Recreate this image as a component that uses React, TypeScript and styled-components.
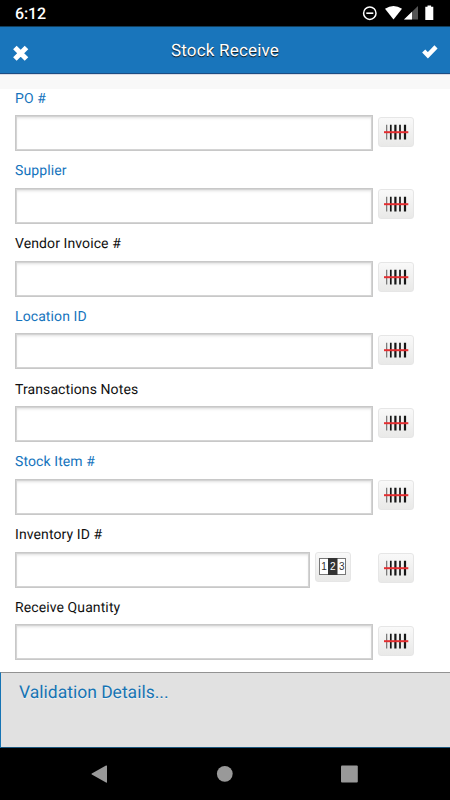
import React from "react";
import styled, { createGlobalStyle } from "styled-components";

const GlobalStyle = createGlobalStyle`
  * { box-sizing: border-box; }
  body { margin: 0; background: #fff; font-family: Roboto, "Liberation Sans", sans-serif; text-rendering: geometricPrecision; }
`;

const Screen = styled.div`
  width: 450px;
  height: 800px;
  display: flex;
  flex-direction: column;
  overflow: hidden;
  background: #fff;
`;

const StatusBar = styled.div`
  height: 26px;
  flex: none;
  display: flex;
  align-items: center;
  justify-content: space-between;
  padding: 2px 13px 0 15px;
  background: #000;
  color: #fff;
`;

const Clock = styled.span`
  font-size: 16px;
  font-weight: 500;
  line-height: 20px;
  letter-spacing: -0.15px;
  padding-bottom: 1px;
`;

const StatusIcons = styled.svg`
  display: block;
  width: 76px;
  height: 20px;
`;

const Header = styled.header`
  height: 48px;
  flex: none;
  display: grid;
  grid-template-columns: 40px 1fr 40px;
  align-items: center;
  background: #1975bb;
  border-top: 1px solid #123f5c;
  border-bottom: 1px solid #1b4c83;
`;

const Title = styled.h1`
  margin: 0;
  padding-top: 2px;
  color: #fff;
  font-size: 17px;
  font-weight: 400;
  line-height: 24px;
  letter-spacing: 0.2px;
  text-align: center;
  text-shadow: 0 1px 1px #111;
`;

const HeaderButton = styled.button`
  width: 40px;
  height: 46px;
  padding: 0;
  border: 0;
  background: none;
  svg { display: block; }
`;

const Strip = styled.div`
  height: 15px;
  flex: none;
  background: #f8f8f8;
  border-top: 1px solid #dadbe4;
`;

const Form = styled.form`
  height: 582px;
  flex: none;
  padding-left: 15px;
`;

const Field = styled.div`
  height: 72.75px;
`;

const Label = styled.label<{ $link?: boolean }>`
  display: block;
  height: 26px;
  padding-top: 0.6px;
  font-size: 14px;
  line-height: 18px;
  letter-spacing: 0.1px;
  color: ${(p) => (p.$link ? "#1674bd" : "#111")};
`;

const Controls = styled.div`
  display: flex;
  align-items: flex-start;
`;

const Input = styled.input<{ $short?: boolean }>`
  width: ${(p) => (p.$short ? 295 : 358)}px;
  height: 36px;
  margin: 0;
  padding: 0 8px;
  border: 1px solid #c8c8c8;
  border-radius: 0;
  background: #fff;
  box-shadow: inset 0 0 0 1px #d4d4d4, inset 0 2px 3px rgba(0, 0, 0, 0.13);
  font: inherit;
  outline: none;
`;

const IconButton = styled.button<{ $gap: number; $top: number }>`
  width: 36px;
  height: 30px;
  margin: ${(p) => p.$top}px 0 0 ${(p) => p.$gap}px;
  padding: 0;
  border: 1px solid #e6e6e6;
  border-radius: 3px;
  background: linear-gradient(#f9f9f9, #e9e9e8);
  svg { display: block; }
`;

const Validation = styled.section`
  height: 76px;
  flex: none;
  margin-top: 0.6px;
  padding: 9px 0 0 18px;
  background: #e1e1e1;
  border-top: 1px solid #929292;
  border-left: 1px solid #1674b4;
  border-bottom: 1px solid #1c587f;
  color: #1674b4;
  font-size: 17.5px;
  line-height: 22px;
  text-shadow: 0 1px 0 #f3f3f3;
`;

const NavBar = styled.nav`
  flex: 1;
  background: #000;
  svg { display: block; }
`;

const Barcode = () => (
  <svg width="34" height="28" viewBox="0 0 34 28">
    <path d="M7.7 6.7v14.8" stroke="#666" strokeWidth="1.1" />
    <path d="M11.8 6.7v14.8M21 6.7v14.8" stroke="#161616" strokeWidth="1.7" />
    <path d="M16.4 6.7v14.8M26 6.7v14.8" stroke="#161616" strokeWidth="2.2" />
    <path d="M5 14.2h24.3" stroke="#e42e31" strokeWidth="2" />
  </svg>
);

const Counter = () => (
  <svg width="34" height="28" viewBox="0 0 34 28" fontFamily="Liberation Sans, sans-serif" fontSize="10" textAnchor="middle">
    <rect x="3.5" y="5.5" width="26" height="16" fill="#fff" stroke="#777" />
    <rect x="12" y="5" width="9.5" height="17" fill="#333" />
    <text x="8" y="17.2" fill="#333">1</text>
    <text x="16.8" y="17.2" fill="#fff">2</text>
    <text x="25.8" y="17.2" fill="#333">3</text>
  </svg>
);

const fields = [
  { label: "PO #", link: true },
  { label: "Supplier", link: true },
  { label: "Vendor Invoice #" },
  { label: "Location ID", link: true },
  { label: "Transactions Notes" },
  { label: "Stock Item #", link: true },
  { label: "Inventory ID #", counter: true },
  { label: "Receive Quantity" },
];

export default function App() {
  return (
    <Screen>
      <GlobalStyle />
      <StatusBar>
        <Clock>6:12</Clock>
        <StatusIcons viewBox="0 0 76 20">
          <circle cx="8.8" cy="9.2" r="6.2" fill="none" stroke="#fff" strokeWidth="1.5" />
          <path d="M5.3 9.2h7" stroke="#fff" strokeWidth="1.6" />
          <path d="M24 4.8q8.5-5.4 17 0L32.5 15.4Z" fill="#fff" />
          <path d="M57 2v13.5H43Z" fill="#555" />
          <path d="M51 7.8V15.5h-8Z" fill="#fff" />
          <path d="M66.5 2.7v-1.2h3.6v1.2h2.2v13.2h-8V2.7Z" fill="#fff" />
        </StatusIcons>
      </StatusBar>
      <Header>
        <HeaderButton type="button" aria-label="Cancel">
          <svg width="40" height="46" viewBox="0 0 40 46">
            <path d="M14.9 20.5l11.6 11.6M26.5 20.5L14.9 32.1" stroke="#fff" strokeWidth="5" />
          </svg>
        </HeaderButton>
        <Title>Stock Receive</Title>
        <HeaderButton type="button" aria-label="Confirm">
          <svg width="40" height="46" viewBox="0 0 40 46">
            <path d="M13.7 24l4.2 4.3 8.1-8.4" fill="none" stroke="#fff" strokeWidth="4.4" />
          </svg>
        </HeaderButton>
      </Header>
      <Strip />
      <Form>
        {fields.map((f, i) => (
          <Field key={f.label}>
            <Label $link={f.link} htmlFor={`field-${i}`}>{f.label}</Label>
            <Controls>
              <Input id={`field-${i}`} $short={f.counter} />
              {f.counter && (
                <IconButton type="button" $gap={5} $top={0.5} aria-label="Enter number">
                  <Counter />
                </IconButton>
              )}
              <IconButton type="button" $gap={f.counter ? 27 : 5} $top={1.5} aria-label="Scan barcode">
                <Barcode />
              </IconButton>
            </Controls>
          </Field>
        ))}
      </Form>
      <Validation>Validation Details...</Validation>
      <NavBar>
        <svg width="450" height="52" viewBox="0 0 450 52" fill="#999">
          <path d="M106 17.6q1-.6 1 .5v16q0 1-1 .5L91.8 26.4q-.8-.5 0-1Z" />
          <circle cx="224.8" cy="25.8" r="7.9" />
          <rect x="341" y="17.6" width="16.8" height="16.8" rx="1" />
        </svg>
      </NavBar>
    </Screen>
  );
}
